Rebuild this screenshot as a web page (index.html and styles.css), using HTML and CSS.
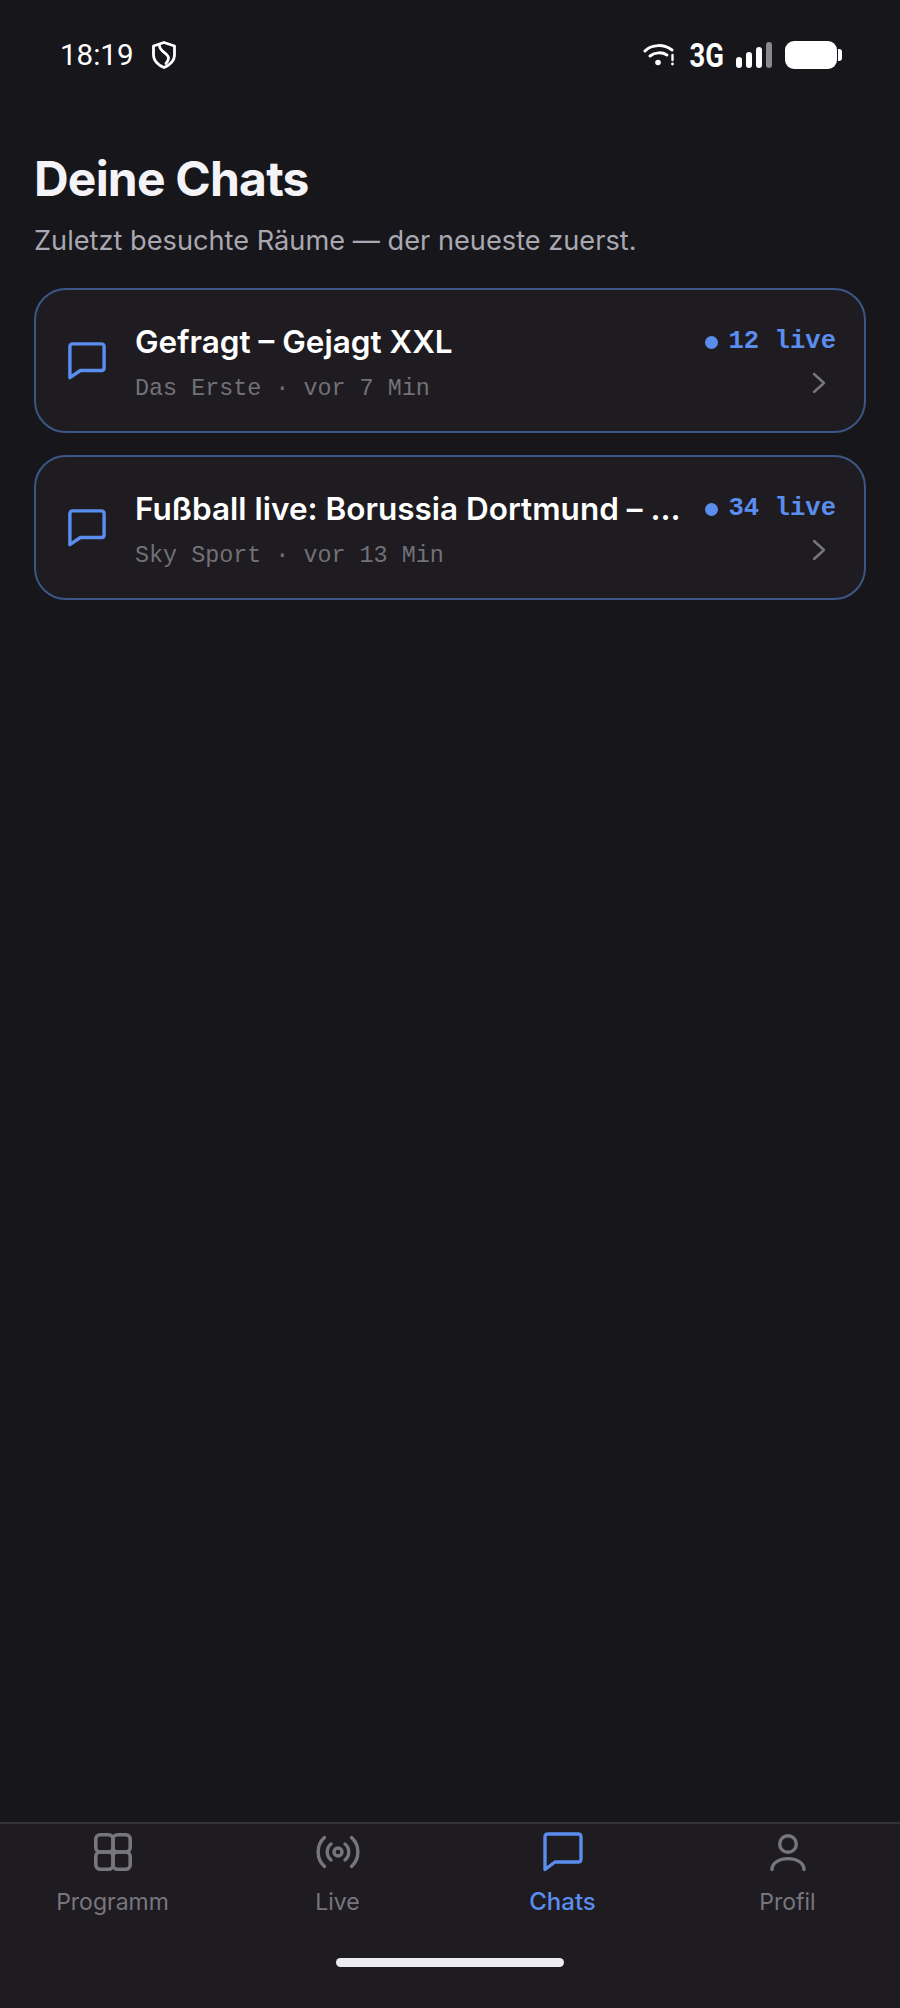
FILE: index.html
```html
<!DOCTYPE html>
<html lang="de">
<head>
  <meta charset="UTF-8" />
  <meta name="viewport" content="width=device-width, initial-scale=1.0"/>
  <title>Deine Chats</title>
  <link rel="stylesheet" href="styles.css">
</head>
<body>
  <div class="app">
    <header class="status-bar">
      <div class="status-left">
        <span class="time">18:19</span>
        <svg class="shield" viewBox="0 0 24 28" fill="none" stroke="#fff" stroke-width="2.8" stroke-linejoin="round" stroke-linecap="round">
          <path d="M12 1.500 L22.500 5 V14 C22.500 20 17 24.500 12 26.500 C7 24.500 1.500 20 1.500 14 V5 Z"/>
          <path d="M7.500 5 C8 11 16.500 12 16.500 17 C16.500 19 15.500 21 14 22.500"/>
        </svg>
      </div>
      <div class="status-right">
        <svg class="wifi" viewBox="0 0 32 24" fill="none" stroke="#fff" stroke-width="3" stroke-linecap="round">
          <path d="M2 8 C9 1 21 1 29 7"/>
          <path d="M7 13 C12 9 19 9 24 12"/>
          <circle cx="15" cy="19.500" r="2.800" fill="#fff" stroke="none"/>
          <path d="M29.500 12 V17" stroke-width="2.400"/>
          <circle cx="29.500" cy="21" r="1.400" fill="#fff" stroke="none"/>
        </svg>
        <span class="network">3G</span>
        <div class="signal">
          <span class="bar bar-1"></span>
          <span class="bar bar-2"></span>
          <span class="bar bar-3"></span>
          <span class="bar bar-4"></span>
        </div>
        <div class="battery"><span class="battery-body"></span><span class="battery-cap"></span></div>
      </div>
    </header>

    <main class="content">
      <h1>Deine Chats</h1>
      <p class="subtitle">Zuletzt besuchte Räume — der neueste zuerst.</p>

      <ul class="chat-list">
        <li class="chat-card">
          <svg class="chat-icon" viewBox="0 0 40 40" fill="none" stroke="#5b8dee" stroke-width="3.600" stroke-linejoin="round">
            <path d="M5 2 H35 Q38 2 38 5 V27 Q38 30 35 30 H13 L2 37.500 V5 Q2 2 5 2 Z"/>
          </svg>
          <div class="chat-text">
            <h3>Gefragt – Gejagt XXL</h3>
            <p class="chat-meta">Das Erste · vor 7 Min</p>
          </div>
          <div class="chat-side">
            <span class="live"><span class="dot"></span>12 live</span>
            <svg class="chevron" viewBox="0 0 14 22" fill="none" stroke="#77767c" stroke-width="2.400" stroke-linecap="round" stroke-linejoin="round"><path d="M2 2 L12 11 L2 20"/></svg>
          </div>
        </li>
        <li class="chat-card">
          <svg class="chat-icon" viewBox="0 0 40 40" fill="none" stroke="#5b8dee" stroke-width="3.600" stroke-linejoin="round">
            <path d="M5 2 H35 Q38 2 38 5 V27 Q38 30 35 30 H13 L2 37.500 V5 Q2 2 5 2 Z"/>
          </svg>
          <div class="chat-text">
            <h3>Fußball live: Borussia Dortmund – …</h3>
            <p class="chat-meta">Sky Sport · vor 13 Min</p>
          </div>
          <div class="chat-side">
            <span class="live"><span class="dot"></span>34 live</span>
            <svg class="chevron" viewBox="0 0 14 22" fill="none" stroke="#77767c" stroke-width="2.400" stroke-linecap="round" stroke-linejoin="round"><path d="M2 2 L12 11 L2 20"/></svg>
          </div>
        </li>
      </ul>
    </main>

    <nav class="tab-bar">
      <div class="tabs">
        <div class="tab">
          <svg viewBox="-2 0 44 40" fill="none" stroke="#77767f" stroke-width="3.600">
            <rect x="2.800" y="2.800" width="17.200" height="17.200" rx="4.500"/>
            <rect x="20" y="2.800" width="17.200" height="17.200" rx="4.500"/>
            <rect x="2.800" y="20" width="17.200" height="17.200" rx="4.500"/>
            <rect x="20" y="20" width="17.200" height="17.200" rx="4.500"/>
          </svg>
          <span>Programm</span>
        </div>
        <div class="tab">
          <svg viewBox="0 0 44 40" fill="none" stroke="#77767f" stroke-width="3.400" stroke-linecap="round">
            <circle cx="22" cy="20" r="4"/>
            <path d="M15 12 C10 16 10 24 15 28"/>
            <path d="M29 12 C34 16 34 24 29 28"/>
            <path d="M8.500 5.500 C0 13 0 27 8.500 34.500"/>
            <path d="M35.500 5.500 C44 13 44 27 35.500 34.500"/>
          </svg>
          <span>Live</span>
        </div>
        <div class="tab tab-active">
          <svg viewBox="-2 0 44 40" fill="none" stroke="#5b8dee" stroke-width="3.400" stroke-linejoin="round">
            <path d="M5 2 H35 Q38 2 38 5 V27 Q38 30 35 30 H12 L2 37.500 V5 Q2 2 5 2 Z"/>
          </svg>
          <span>Chats</span>
        </div>
        <div class="tab">
          <svg viewBox="-2 0 44 40" fill="none" stroke="#77767f" stroke-width="3.400" stroke-linecap="round">
            <circle cx="20" cy="12" r="8.300"/>
            <path d="M4 37.500 C4 23 36 23 36 37.500"/>
          </svg>
          <span>Profil</span>
        </div>
      </div>
      <div class="home-indicator"></div>
    </nav>
  </div>
</body>
</html>
```
FILE: styles.css
```css
* {
  box-sizing: border-box;
}

body {
  margin: 0;
  background: #17161b;
  font-family: "Inter", Arial, sans-serif;
  color: #f4f3f7;
}

.app {
  display: flex;
  flex-direction: column;
  height: 2008px;
}

/* status bar */

.status-bar {
  display: flex;
  justify-content: space-between;
  align-items: center;
  height: 110px;
  padding: 0 58px 0 60px;
  flex-shrink: 0;
}

.status-left {
  display: flex;
  align-items: center;
  gap: 19px;
}

.time {
  font-family: "Roboto", sans-serif;
  font-size: 29.500px;
  color: #fff;
}

.shield {
  width: 24px;
  height: 28px;
}

.status-right {
  display: flex;
  align-items: center;
}

.wifi {
  width: 32px;
  height: 24px;
  margin-right: 11px;
}

.network {
  font-family: "Roboto", sans-serif;
  font-weight: 700;
  font-size: 33px;
  transform: scaleX(0.83);
  color: #fff;
  margin-right: 9px;
}

.signal {
  display: flex;
  align-items: flex-end;
  gap: 4px;
  height: 26px;
  margin-right: 13px;
}

.bar {
  width: 6px;
  background: #fff;
  border-radius: 3px;
}

.bar-1 { height: 11px; }
.bar-2 { height: 16px; }
.bar-3 { height: 21px; }
.bar-4 { height: 26px; background: #8a8a8c; }

.battery {
  display: flex;
  align-items: center;
  gap: 1px;
}

.battery-body {
  width: 52px;
  height: 28px;
  background: #fff;
  border-radius: 9px;
}

.battery-cap {
  width: 4px;
  height: 12px;
  background: #fff;
  border-radius: 0 3px 3px 0;
}

/* content */

.content {
  flex: 1;
  padding: 40px 34px 0;
}

h1 {
  margin: 0;
  font-size: 48px;
  line-height: 58px;
  font-weight: 700;
  letter-spacing: -0.8px;
}

.subtitle {
  margin: 15px 0 0;
  font-size: 27.200px;
  line-height: 36px;
  color: #a9a8b1;
}

.chat-list {
  list-style: none;
  margin: 29px 0 0;
  padding: 0;
  display: flex;
  flex-direction: column;
  gap: 22px;
}

.chat-card {
  display: flex;
  align-items: center;
  height: 145px;
  padding: 0 28px 0 32px;
  background: #1e1c21;
  border: 2px solid #3c5686;
  border-radius: 32px;
}

.chat-icon {
  width: 38px;
  height: 38px;
  flex-shrink: 0;
  margin-right: 29px;
}

.chat-text {
  flex: 1;
  min-width: 0;
  padding-top: 5px;
}

.chat-text h3 {
  margin: 0;
  font-size: 31.500px;
  line-height: 40px;
  font-weight: 600;
  color: #fff;
  white-space: nowrap;
}

.chat-meta {
  margin: 12px 0 0;
  font-family: "Liberation Mono", monospace;
  font-size: 23.400px;
  line-height: 30px;
  color: #727177;
}

.chat-side {
  display: flex;
  flex-direction: column;
  align-items: flex-end;
  gap: 15px;
  margin-left: 23px;
  flex-shrink: 0;
}

.live {
  display: flex;
  align-items: center;
  gap: 10px;
  font-family: "Liberation Mono", monospace;
  font-weight: 700;
  font-size: 25.600px;
  line-height: 30px;
  color: #5b8dee;
}

.dot {
  width: 13px;
  height: 13px;
  border-radius: 50%;
  background: #5b8dee;
}

.chevron {
  width: 14px;
  height: 22px;
  margin-right: 10px;
}

/* bottom tabs */

.tab-bar {
  height: 186px;
  flex-shrink: 0;
  background: #1e1c21;
  border-top: 2px solid #333237;
  display: flex;
  flex-direction: column;
}

.tabs {
  display: grid;
  grid-template-columns: repeat(4, 1fr);
  padding-top: 8px;
}

.tab {
  display: flex;
  flex-direction: column;
  align-items: center;
  gap: 15px;
  font-size: 23px;
  line-height: 30px;
  color: #77767f;
}

.tab svg {
  width: 44px;
  height: 40px;
}

.tab-active {
  color: #5b8dee;
  font-size: 24px;
  font-weight: 500;
}

.home-indicator {
  width: 228px;
  height: 9px;
  margin: 41px auto 0;
  background: #ececee;
  border-radius: 5px;
}
```
